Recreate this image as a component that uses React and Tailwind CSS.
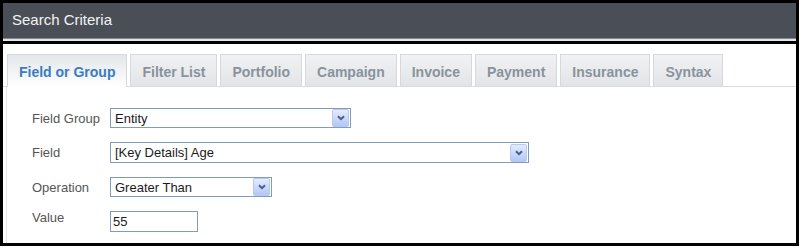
import React from "react";

const font = { fontFamily: '"Liberation Sans", Arial, sans-serif' };

function Chevron() {
  return (
    <div className="w-[17px] h-[18px] shrink-0 rounded-[2px] border border-[#b8c9f2] bg-gradient-to-b from-[#e3ebfe] to-[#b4c7f5] flex items-center justify-center">
      <svg width="8" height="6" viewBox="0 0 8 6">
        <path d="M1 1.2 L4 4.2 L7 1.2" fill="none" stroke="#4b5f86" strokeWidth="2" />
      </svg>
    </div>
  );
}

function Select({ value, w, h }) {
  return (
    <div
      className={`${w} ${h} border border-[#7f9db9] bg-white flex items-center justify-between pl-[4px] pr-[1px]`}
    >
      <span className="text-[13px] text-[#1b1b1b] leading-[15px]">{value}</span>
      <Chevron />
    </div>
  );
}

const tabs = [
  "Field or Group",
  "Filter List",
  "Portfolio",
  "Campaign",
  "Invoice",
  "Payment",
  "Insurance",
  "Syntax",
];

export default function App() {
  return (
    <div className="w-[802px] h-[250px] bg-white" style={font}>
      <div className="w-[799px] h-[246px] border-[3px] border-black flex flex-col bg-white">
        <div className="h-[35px] shrink-0 bg-[#4a4f57] flex items-center pl-[9px] text-[15px] text-[#f2f3f4]">
          Search Criteria
        </div>
        <div className="h-px shrink-0 bg-[#85898e]" />
        <div className="h-[2px] shrink-0 bg-[#e4e5e6]" />
        <div className="h-[3px] shrink-0 bg-black" />
        <div className="flex-1 pt-[10px] flex flex-col">
          <div className="h-[33px] flex items-end gap-[3px] pl-[4px] border-b border-[#d9dcdf]">
            {tabs.map((t, i) =>
              i === 0 ? (
                <div
                  key={t}
                  className="h-[33px] -mb-px relative px-[11px] pt-[9px] border border-b-0 border-[#d6d9dc] bg-gradient-to-b from-[#e3e7eb] to-white text-[14px] leading-[16px] font-bold text-[#3a7cc2]"
                >
                  {t}
                </div>
              ) : (
                <div
                  key={t}
                  className="h-[32px] px-[11px] pt-[9px] border border-b-0 border-[#d6d9dc] bg-gradient-to-b from-[#f0f1f3] to-[#e2e5e8] text-[14px] leading-[16px] font-bold text-[#8a929b]"
                >
                  {t}
                </div>
              )
            )}
          </div>
          <div className="flex-1 ml-[3px] border-l border-[#e6e6e6] pl-[25px] pt-[21px] flex flex-col">
            <div className="flex items-center h-[20px]">
              <div className="w-[78px] text-[13px] text-[#555] leading-[15px]">Field Group</div>
              <Select value="Entity" w="w-[241px]" h="h-[20px]" />
            </div>
            <div className="flex items-center h-[21px] mt-[14px]">
              <div className="w-[78px] text-[13px] text-[#555] leading-[15px]">Field</div>
              <Select value="[Key Details] Age" w="w-[419px]" h="h-[21px]" />
            </div>
            <div className="flex items-center h-[20px] mt-[14px]">
              <div className="w-[78px] text-[13px] text-[#555] leading-[15px]">Operation</div>
              <Select value="Greater Than" w="w-[162px]" h="h-[20px]" />
            </div>
            <div className="flex items-start h-[21px] mt-[14px]">
              <div className="w-[78px] text-[13px] text-[#555] leading-[15px] -mt-[1px]">Value</div>
              <div className="w-[88px] h-[21px] border border-[#7f9db9] bg-white flex items-center pl-[2px] text-[13px] text-[#1b1b1b] leading-[15px]">
                55
              </div>
            </div>
          </div>
        </div>
      </div>
    </div>
  );
}
